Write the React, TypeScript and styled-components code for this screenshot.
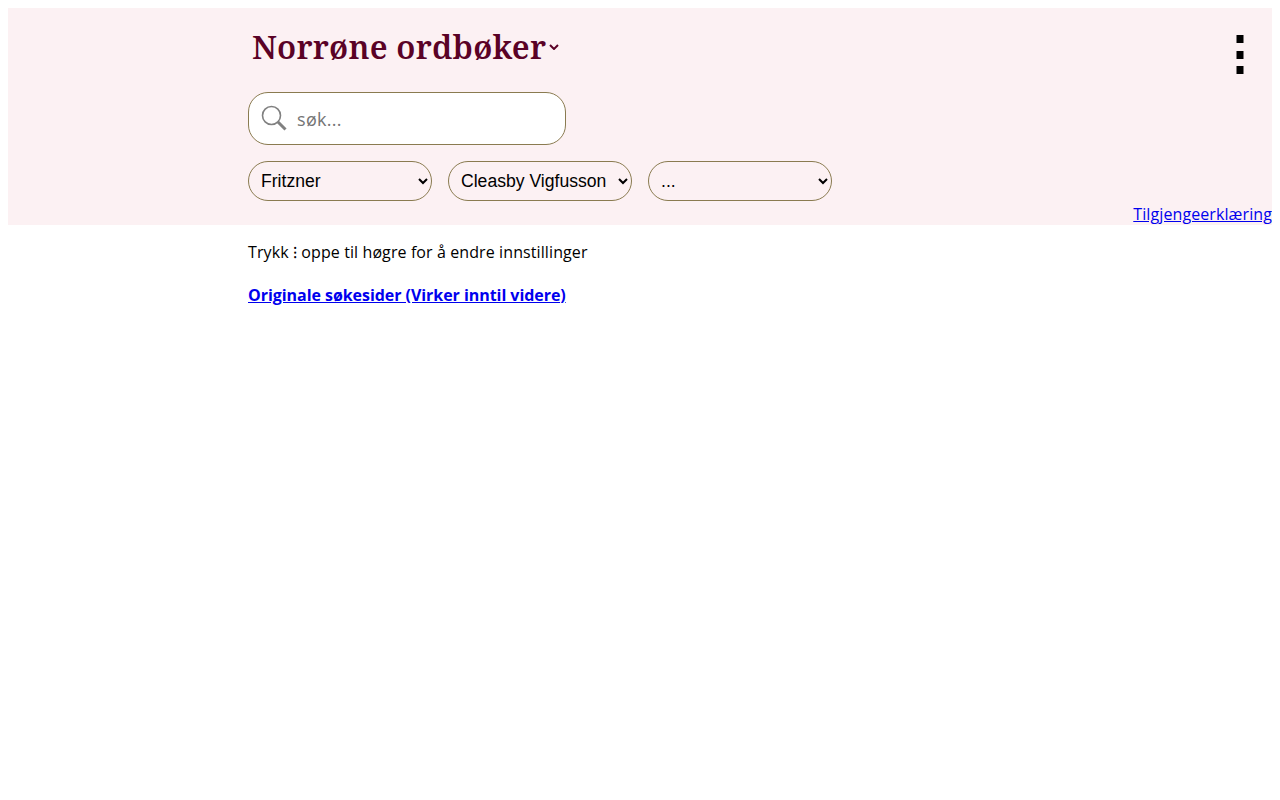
import React from "react";
import styled, {createGlobalStyle} from "styled-components";

const GlobalStyle = createGlobalStyle`
    body {
        margin: 8px;
        background: #FFFFFF;
        color: #000000;
        font-family: "Open Sans", sans-serif;
        font-size: 16px;
    }
`

const App: React.FC = function () {
    return (
        <>
            <GlobalStyle/>
            <Header>
                <TitleRow>
                    <Title>Norrøne ordbøker</Title>
                    <Chevron viewBox="0 0 10 6">
                        <path d="M1 1l4 4 4-4" fill="none" stroke="#5A0226" strokeWidth="2"/>
                    </Chevron>
                </TitleRow>
                <SearchBox>
                    <SearchIcon viewBox="0 0 26 26">
                        <circle cx="10.5" cy="10.5" r="9" fill="none" stroke="#808080" strokeWidth="1.6"/>
                        <path d="M17 17l7.5 7.5" fill="none" stroke="#808080" strokeWidth="3"/>
                    </SearchIcon>
                    <SearchInput placeholder="søk..."/>
                </SearchBox>
                <Selects>
                    <Select defaultValue="Fritzner">
                        <option>Fritzner</option>
                    </Select>
                    <Select defaultValue="Cleasby Vigfusson">
                        <option>Cleasby Vigfusson</option>
                    </Select>
                    <Select defaultValue="...">
                        <option>...</option>
                    </Select>
                </Selects>
                <MenuButton viewBox="0 0 8 40">
                    <rect x="0.5" y="0" width="7" height="8"/>
                    <rect x="0.5" y="16" width="7" height="8"/>
                    <rect x="0.5" y="31" width="7" height="8"/>
                </MenuButton>
                <AccessLink href="#">Tilgjengeerklæring</AccessLink>
            </Header>
            <Main>
                <Hint>Trykk ⁝ oppe til høgre for å endre innstillinger</Hint>
                <StrongLink href="#">Originale søkesider (Virker inntil videre)</StrongLink>
            </Main>
        </>
    )
}

export default App

const Header = styled.header`
    position: relative;
    box-sizing: border-box;
    height: 217px;
    padding: 16px 0 0 240px;
    background: #FCF1F3;
`
const TitleRow = styled.div`
    display: flex;
    align-items: center;
    height: 46px;
    padding-left: 4px;
`
const Title = styled.h1`
    margin: 0;
    color: #5A0226;
    font-family: "Noto Serif", "DejaVu Serif", serif;
    font-size: 32px;
    font-weight: 600;
    letter-spacing: 0.2px;
    line-height: 46px;
`
const Chevron = styled.svg`
    width: 10px;
    height: 6px;
    margin: 0 0 0 3px;
`
const SearchBox = styled.div`
    display: flex;
    align-items: center;
    box-sizing: border-box;
    width: 318px;
    height: 53px;
    margin-top: 22px;
    padding-left: 12px;
    background: #FFFFFF;
    border: 1px solid #8A7B50;
    border-radius: 20px;
`
const SearchIcon = styled.svg`
    flex: none;
    width: 26px;
    height: 26px;
    margin-top: -1px;
`
const SearchInput = styled.input`
    flex: 1;
    min-width: 0;
    margin-left: 10px;
    padding: 0;
    border: none;
    outline: none;
    background: transparent;
    font-family: "Open Sans", sans-serif;
    font-size: 18px;
    letter-spacing: 0.3px;

    &::placeholder {
        color: #757575;
    }
`
const Selects = styled.div`
    display: flex;
    gap: 16px;
    margin-top: 16px;
`
const Select = styled.select`
    box-sizing: border-box;
    width: 184px;
    height: 40px;
    padding: 0 0 0 8px;
    background: #FFFFFF00;
    border: 1px solid #8A7B50;
    border-radius: 20px;
    color: #000000;
    font-family: "Liberation Sans", sans-serif;
    font-size: 17.6px;
`
const MenuButton = styled.svg`
    position: absolute;
    top: 27px;
    right: 28px;
    width: 8px;
    height: 40px;
    fill: #000000;
`
const AccessLink = styled.a`
    position: absolute;
    right: 0;
    bottom: 0;
    color: #0000EE;
    font-size: 16px;
    letter-spacing: 0.1px;
    line-height: 22px;
`
const Main = styled.main`
    padding: 16px 0 0 240px;
`
const Hint = styled.p`
    margin: 0 0 21px;
    font-size: 16px;
    letter-spacing: 0.1px;
    line-height: 22px;
`
const StrongLink = styled.a`
    color: #0000EE;
    font-size: 16px;
    font-weight: 700;
    letter-spacing: -0.05px;
    line-height: 22px;
`
